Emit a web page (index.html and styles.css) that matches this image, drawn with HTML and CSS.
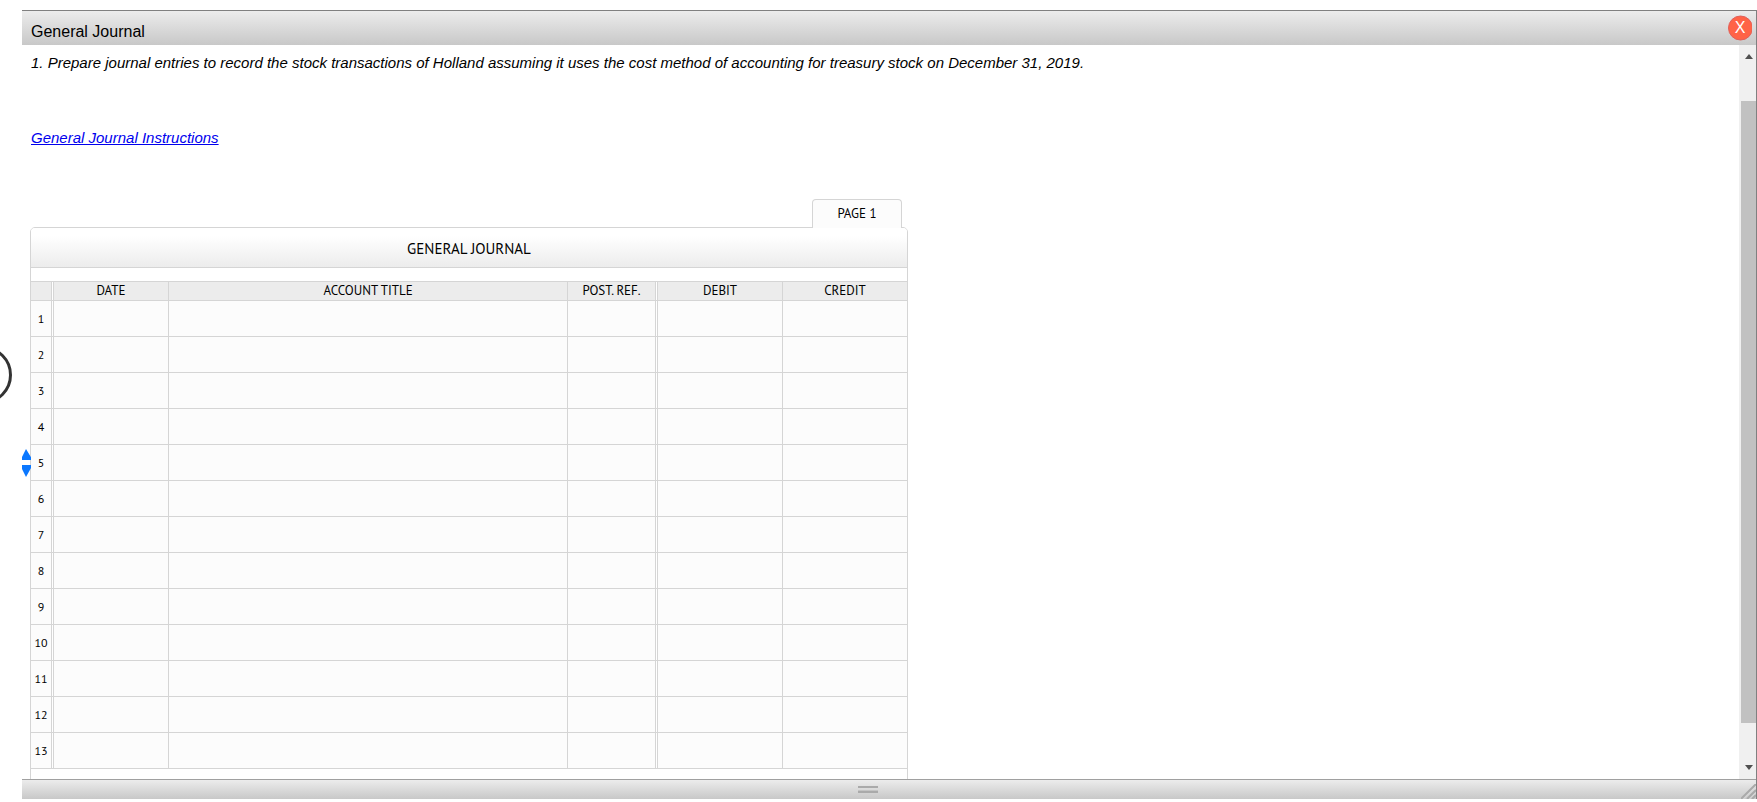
FILE: index.html
```html
<!DOCTYPE html>
<html lang="en">
<head>
<meta charset="utf-8">
<title>General Journal</title>
<link rel="stylesheet" href="styles.css">
</head>
<body>
<button class="prev" type="button" aria-label="Previous">
  <svg width="12" height="60" viewBox="0 0 12 60"><circle cx="-17" cy="30" r="27.5" fill="#fff" stroke="#333" stroke-width="3"/></svg>
</button>
<section class="window">
  <header class="titlebar">
    <h1 class="title">General Journal</h1>
    <button class="close" type="button" aria-label="Close">
      <svg width="24" height="26" viewBox="0 0 24 26"><circle cx="12.5" cy="13" r="12" fill="#ff6347" stroke="#e0605a"/></svg>
      <span class="close-x">X</span>
    </button>
  </header>
  <div class="body">
    <main class="content">
      <p class="task">1. Prepare journal entries to record the stock transactions of Holland assuming it uses the cost method of accounting for treasury stock on December 31, 2019.</p>
      <p class="help"><a href="#instructions">General Journal Instructions</a></p>
      <div class="journal">
        <div class="tabs"><button class="tab" type="button">PAGE 1</button></div>
        <div class="card">
          <h2 class="card-title">GENERAL JOURNAL</h2>
          <table class="ledger">
            <colgroup><col class="c-num"><col class="c-date"><col><col class="c-ref"><col class="c-debit"><col class="c-credit"></colgroup>
            <thead>
              <tr><th class="double"></th><th>DATE</th><th>ACCOUNT TITLE</th><th class="double">POST. REF.</th><th>DEBIT</th><th>CREDIT</th></tr>
            </thead>
            <tbody id="rows"></tbody>
          </table>
        </div>
      </div>
    </main>
    <div class="scroll">
      <svg class="arrow" width="8" height="5" viewBox="0 0 8 5"><path d="M0 5L4 0L8 5Z" fill="#505050"/></svg>
      <div class="track"><div class="thumb"></div></div>
      <svg class="arrow" width="8" height="5" viewBox="0 0 8 5"><path d="M0 0L4 5L8 0Z" fill="#505050"/></svg>
    </div>
    <svg class="spinner" width="9" height="28" viewBox="0 0 9 28"><path d="M4 0L9.500 9V11H0V8ZM0 16H9.500V18L4 28L0 20Z" fill="#0b78ff"/></svg>
  </div>
  <footer class="statusbar">
    <svg class="grip" width="20" height="8" viewBox="0 0 20 8"><path d="M0 1H20M0 6H20" stroke="#aaa" stroke-width="2"/><path d="M0 4.500H20" stroke="#c4c4c4"/></svg>
    <svg class="resize" width="15" height="15" viewBox="0 0 15 15"><path d="M0 15L15 0M6 15L15 6M11 15L15 11" stroke="#aaa" stroke-width="2" fill="none"/><path d="M2.500 15L15 2.500M8.500 15L15 8.500" stroke="#d8d8d8" fill="none"/></svg>
  </footer>
</section>
<script src="script.js"></script>
</body>
</html>
```
FILE: styles.css
```css
* { box-sizing: border-box; }
body {
  margin: 0;
  height: 100vh;
  padding: 10px 0 3px 22px;
  overflow: hidden;
  background: #fff;
  color: #000;
  font-family: "Liberation Sans", Arial, sans-serif;
}
button { border: 0; padding: 0; background: none; color: inherit; font: inherit; }
svg { display: block; }
.prev { position: absolute; left: 0; top: 345px; }
.window {
  height: 100%;
  display: flex;
  flex-direction: column;
  border-top: 1px solid #808080;
  border-right: 1px solid #808080;
}
.titlebar {
  flex: none;
  height: 34px;
  display: flex;
  justify-content: space-between;
  align-items: center;
  padding: 0 4px 0 9px;
  background: linear-gradient(#ececec, #c8c8c8);
}
.title { margin: 0; padding-top: 7px; font-size: 16px; font-weight: 400; line-height: 20px; }
.close { display: grid; color: #fff; font-size: 16px; line-height: 26px; }
.close > * { grid-area: 1 / 1; }
.close-x { text-align: center; }
.body { flex: 1; min-height: 0; display: flex; position: relative; overflow: hidden; }
.content { flex: 1; min-width: 0; padding: 8px; font-size: 15px; font-style: italic; line-height: 20px; }
.task { margin: 0 0 55px; padding-left: 1px; }
.help { margin: 0 0 51px; padding-left: 1px; }
.help a { color: #00e; }
.journal { max-width: 878px; font-family: "PT Sans", "Noto Sans", sans-serif; font-style: normal; }
.tabs { display: flex; justify-content: flex-end; padding-right: 6px; }
.tab {
  position: relative;
  z-index: 1;
  width: 90px;
  height: 29px;
  margin-bottom: -1px;
  border: 1px solid #d5d5d5;
  border-bottom: 0;
  border-radius: 4px 4px 0 0;
  background: #fcfcfc;
  font-size: 13px;
}
.card { border: 1px solid #d5d5d5; border-radius: 5px; padding-bottom: 40px; }
.card-title {
  margin: 0 0 13px;
  padding-top: 2px;
  border-bottom: 1px solid #d5d5d5;
  border-radius: 4px 4px 0 0;
  background: linear-gradient(#fff 20%, #ececec);
  font-size: 15px;
  font-weight: 400;
  line-height: 37px;
  text-align: center;
}
.ledger { width: 100%; table-layout: fixed; border-collapse: separate; border-spacing: 0; }
.c-num { width: 23px; }
.c-date { width: 115px; }
.c-ref { width: 90px; }
.c-debit { width: 125px; }
.c-credit { width: 124px; }
.ledger th, .ledger td {
  padding: 0;
  border-right: 1px solid #d5d5d5;
  border-bottom: 1px solid #d5d5d5;
  background-clip: padding-box;
}
.ledger th {
  height: 20px;
  border-top: 1px solid #d5d5d5;
  background-color: #ececec;
  font-size: 13px;
  font-weight: 400;
  line-height: 18px;
  text-align: center;
}
.ledger tbody th, .ledger td { height: 36px; border-top: 0; background-color: #fcfcfc; }
.ledger tbody th { padding-top: 1px; font-size: 12px; }
.ledger th:last-child, .ledger td:last-child { border-right: 0; }
.ledger .double { border-right: 3px double #d5d5d5; }
.ledger input { display: block; width: 100%; height: 35px; border: 0; padding: 0 6px; background: none; font: inherit; }
.scroll {
  flex: none;
  width: 17px;
  display: flex;
  flex-direction: column;
  align-items: center;
  padding: 9px 0;
  background: #f0f0f0;
}
.arrow { margin-left: 3px; }
.track { flex: 1; align-self: stretch; padding: 42px 0 42px 2px; }
.thumb { height: 100%; background: #c1c1c1; }
.spinner { position: absolute; left: 0; top: 404px; }
.statusbar {
  flex: none;
  height: 20px;
  display: grid;
  grid-template-columns: 15px 1fr 15px;
  align-items: center;
  border-top: 1px solid #a0a0a0;
  background: linear-gradient(#ececec, #c8c8c8);
}
.grip { grid-column: 2; justify-self: center; margin-right: 42px; }
.resize { align-self: end; }
```
FILE: script.js
```js
const columns = ['Date', 'Account title', 'Post. ref.', 'Debit', 'Credit'];
const rows = document.getElementById('rows');
for (let n = 1; n <= 13; n++) {
  const tr = document.createElement('tr');
  tr.innerHTML = `<th class="double" scope="row">${n}</th>` + columns.map((name, i) =>
    `<td${i === 2 ? ' class="double"' : ''}><input type="text" aria-label="${name}, row ${n}"></td>`).join('');
  rows.append(tr);
}
```
